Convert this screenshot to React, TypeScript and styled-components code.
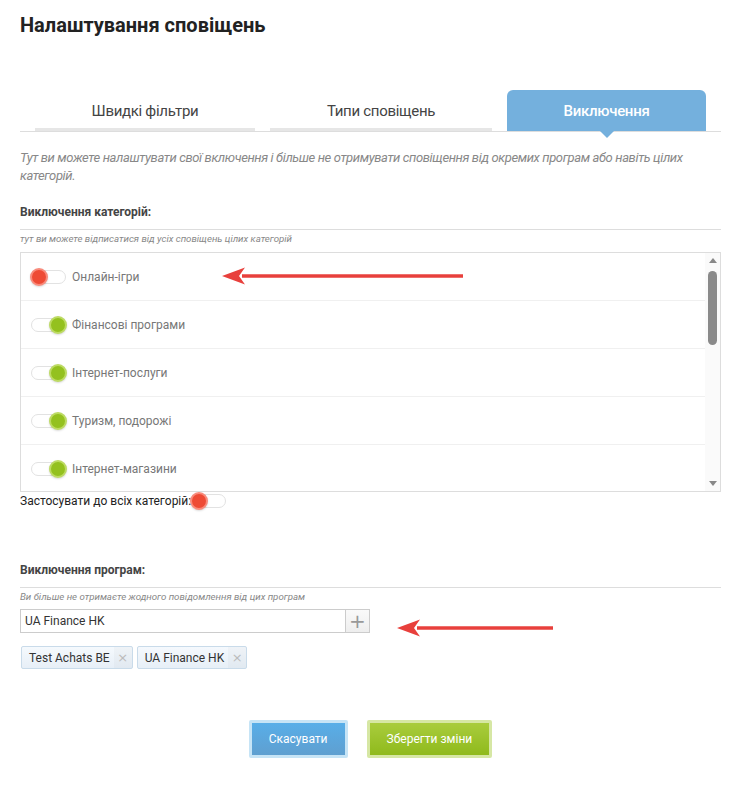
import React, { useState } from 'react'
import styled, { createGlobalStyle, css } from 'styled-components'

const GlobalStyle = createGlobalStyle`
  body {
    margin: 0;
    background: #fff;
    font-family: Roboto, 'Liberation Sans', Arial, sans-serif;
    color: #333;
  }
`

const Page = styled.div`
  width: 701px;
  padding: 13px 15px 30px 20px;
`

const Title = styled.h1`
  margin: 0;
  font-size: 20px;
  line-height: 24px;
  font-weight: 700;
  color: #222;
`

const TabBar = styled.div`
  margin-top: 53px;
  display: grid;
  grid-template-columns: 220px 222px 199px;
  column-gap: 15px;
  padding: 0 15px;
  border-bottom: 1px solid #ddd;
`

const Tab = styled.div<{ $active?: boolean }>`
  position: relative;
  height: 41px;
  display: flex;
  align-items: center;
  justify-content: center;
  font-size: 15px;
  letter-spacing: -0.3px;
  color: #444;
  box-sizing: border-box;
  border-bottom: 3px solid #e6e6e6;
  padding-top: 3px;

  ${(p) =>
    p.$active &&
    css`
      background: #74b0dd;
      color: #fff;
      font-weight: 500;
      border-bottom: none;
      padding-top: 0;
      border-radius: 6px 6px 0 0;

      &::after {
        content: '';
        position: absolute;
        left: 50%;
        bottom: -7px;
        margin-left: -7px;
        border-left: 7px solid transparent;
        border-right: 7px solid transparent;
        border-top: 7px solid #74b0dd;
      }
    `}
`

const Intro = styled.p`
  margin: 17px 0 0;
  font-size: 13px;
  line-height: 18px;
  font-style: italic;
  letter-spacing: -0.38px;
  color: #888;
`

const SectionHead = styled.h3<{ $gap: number }>`
  margin: ${(p) => p.$gap}px 0 0;
  padding-bottom: 8px;
  border-bottom: 1px solid #ddd;
  font-size: 12px;
  line-height: 17px;
  font-weight: 700;
  color: #444;
`

const Hint = styled.div`
  margin-top: 2px;
  font-size: 9.7px;
  line-height: 14px;
  font-style: italic;
  color: #888;
`

const CategoryBox = styled.div`
  margin-top: 6px;
  height: 238px;
  border: 1px solid #ddd;
  display: flex;
`

const CategoryList = styled.div`
  flex: 1;
  overflow: hidden;
`

const Rail = styled.div`
  width: 15px;
  flex: none;
  background: #fafafa;
  display: flex;
  flex-direction: column;
  align-items: center;
`

const RailArrow = styled.span<{ $down?: boolean }>`
  height: 15px;
  flex: none;
  display: flex;
  align-items: center;
  justify-content: center;

  &::before {
    content: '';
    border-left: 4px solid transparent;
    border-right: 4px solid transparent;
    ${(p) => (p.$down ? 'border-top: 5px solid #888;' : 'border-bottom: 5px solid #888;')}
  }
`

const RailTrack = styled.div`
  flex: 1;
  width: 100%;
  display: flex;
  justify-content: center;
  padding-top: 3px;
  box-sizing: border-box;
`

const Thumb = styled.div<{ $size: number }>`
  width: 9px;
  height: ${(p) => p.$size}px;
  border-radius: 5px;
  background: #8a8a8a;
`

const CategoryRow = styled.div`
  position: relative;
  height: 47px;
  display: flex;
  align-items: center;
  gap: 6px;
  padding-left: 10px;
  border-bottom: 1px solid #f0f0f0;
  font-size: 12px;
  color: #777;
`

const Track = styled.span`
  position: relative;
  display: inline-block;
  flex: none;
  width: 35px;
  height: 14px;
  box-sizing: border-box;
  border: 1px solid #e2e2e2;
  border-radius: 7px;
  background: #fff;
`

const Knob = styled.span<{ $on: boolean }>`
  position: absolute;
  top: -3px;
  ${(p) => (p.$on ? 'right: -2px;' : 'left: -2px;')}
  width: 14px;
  height: 14px;
  border-radius: 50%;
  background: ${(p) => (p.$on ? '#94c11f' : '#ee4b35')};
  border: 2px solid ${(p) => (p.$on ? '#bddb63' : '#f98b7c')};
  box-shadow: 0 1px 2px rgba(0, 0, 0, 0.15);
`

const ApplyAll = styled.div`
  display: flex;
  align-items: center;
  font-size: 12px;
  line-height: 18px;
  color: #222;
`

const InputRow = styled.div`
  position: relative;
  margin-top: 5px;
  display: flex;
  width: 350px;
  height: 24px;
`

const TextInput = styled.input`
  flex: 1;
  min-width: 0;
  box-sizing: border-box;
  border: 1px solid #ccc;
  border-right: none;
  padding: 0 4px;
  font-family: Roboto, 'Liberation Sans', Arial, sans-serif;
  font-size: 12px;
  color: #333;
  outline: none;
`

const AddButton = styled.button`
  width: 25px;
  flex: none;
  box-sizing: border-box;
  border: 1px solid #ccc;
  background: linear-gradient(#fafafa, #eee);
  color: #999;
  font-size: 20px;
  line-height: 20px;
  padding: 0;
  font-family: 'DejaVu Sans', sans-serif;
`

const Tags = styled.div`
  margin-top: 13px;
  display: flex;
  gap: 4px;
  padding-left: 1px;
`

const Tag = styled.span`
  display: inline-flex;
  align-items: stretch;
  height: 23px;
  box-sizing: border-box;
  border: 1px solid #c9dbea;
  border-radius: 2px;
  background: linear-gradient(#f5f9fd, #e7eff7);
  font-size: 12px;
  color: #333;
  overflow: hidden;
`

const TagText = styled.span`
  display: flex;
  align-items: center;
  padding: 0 4px 0 7px;
`

const TagClose = styled.span`
  display: flex;
  align-items: center;
  justify-content: center;
  width: 18px;
  background: rgba(0, 0, 0, 0.025);
  color: #bbb;
  font-size: 13px;
  font-family: 'DejaVu Sans', sans-serif;
`

const Actions = styled.div`
  margin-top: 51px;
  display: flex;
  justify-content: center;
  gap: 19px;
`

const ActionButton = styled.button<{ $variant: 'blue' | 'green' }>`
  height: 38px;
  box-sizing: border-box;
  padding: 0 17px;
  border: 3px solid ${(p) => (p.$variant === 'blue' ? '#c6e4f6' : '#d6e7a4')};
  border-radius: 2px;
  background: ${(p) =>
    p.$variant === 'blue'
      ? 'linear-gradient(#58aee8, #5f9fd0)'
      : 'linear-gradient(#a9cc3d, #8fba1c)'};
  color: #fff;
  font-family: Roboto, 'Liberation Sans', Arial, sans-serif;
  font-size: 12px;
  cursor: pointer;
`

const ArrowMark = styled.svg<{ $left: number; $top: number }>`
  position: absolute;
  left: ${(p) => p.$left}px;
  top: ${(p) => p.$top}px;
  overflow: visible;
  pointer-events: none;
`

const Arrow = ({ left, top, length }: { left: number; top: number; length: number }) => (
  <ArrowMark $left={left} $top={top} width={length} height={18} viewBox={`0 0 ${length} 18`}>
    <line x1={20} y1={9} x2={length} y2={9} stroke="#e8403c" strokeWidth={3.5} />
    <path d="M0 9 L23 0.5 L17 9 L23 17.5 Z" fill="#e8403c" />
  </ArrowMark>
)

const Toggle = ({ on }: { on: boolean }) => (
  <Track>
    <Knob $on={on} />
  </Track>
)

const categories = [
  { name: 'Онлайн-ігри', on: false },
  { name: 'Фінансові програми', on: true },
  { name: 'Інтернет-послуги', on: true },
  { name: 'Туризм, подорожі', on: true },
  { name: 'Інтернет-магазини', on: true },
  { name: 'Мода та одяг', on: true },
  { name: 'Електроніка', on: true },
  { name: 'Дім і сад', on: true },
  { name: 'Освіта', on: true },
  { name: 'Здоров\u2019я та краса', on: true },
  { name: 'Телекомунікації', on: true },
  { name: 'Розваги', on: true },
  { name: 'Авто', on: true },
  { name: 'Спорт', on: true },
]

const BOX_HEIGHT = 238
const ROW_HEIGHT = 48
const thumbSize = Math.round(((BOX_HEIGHT - 30) * BOX_HEIGHT) / (categories.length * ROW_HEIGHT))

export default function App() {
  const [program, setProgram] = useState('UA Finance HK')
  const excluded = ['Test Achats BE', 'UA Finance HK']

  return (
    <>
      <GlobalStyle />
      <Page>
        <Title>Налаштування сповіщень</Title>

        <TabBar>
          <Tab>Швидкі фільтри</Tab>
          <Tab>Типи сповіщень</Tab>
          <Tab $active>Виключення</Tab>
        </TabBar>

        <Intro>
          Тут ви можете налаштувати свої включення і більше не отримувати сповіщення від окремих
          програм або навіть цілих категорій.
        </Intro>

        <SectionHead $gap={19}>Виключення категорій:</SectionHead>
        <Hint>тут ви можете відписатися від усіх сповіщень цілих категорій</Hint>

        <CategoryBox>
          <CategoryList>
            {categories.map((c, i) => (
              <CategoryRow key={c.name}>
                <Toggle on={c.on} />
                {c.name}
                {i === 0 && <Arrow left={201} top={14} length={241} />}
              </CategoryRow>
            ))}
          </CategoryList>
          <Rail>
            <RailArrow />
            <RailTrack>
              <Thumb $size={thumbSize} />
            </RailTrack>
            <RailArrow $down />
          </Rail>
        </CategoryBox>

        <ApplyAll>
          Застосувати до всіх категорій:
          <Toggle on={false} />
        </ApplyAll>

        <SectionHead $gap={52}>Виключення програм:</SectionHead>
        <Hint>Ви більше не отримаєте жодного повідомлення від цих програм</Hint>

        <InputRow>
          <TextInput value={program} onChange={(e) => setProgram(e.target.value)} />
          <AddButton>+</AddButton>
          <Arrow left={377} top={10} length={156} />
        </InputRow>

        <Tags>
          {excluded.map((t) => (
            <Tag key={t}>
              <TagText>{t}</TagText>
              <TagClose>×</TagClose>
            </Tag>
          ))}
        </Tags>

        <Actions>
          <ActionButton $variant="blue">Скасувати</ActionButton>
          <ActionButton $variant="green">Зберегти зміни</ActionButton>
        </Actions>
      </Page>
    </>
  )
}
